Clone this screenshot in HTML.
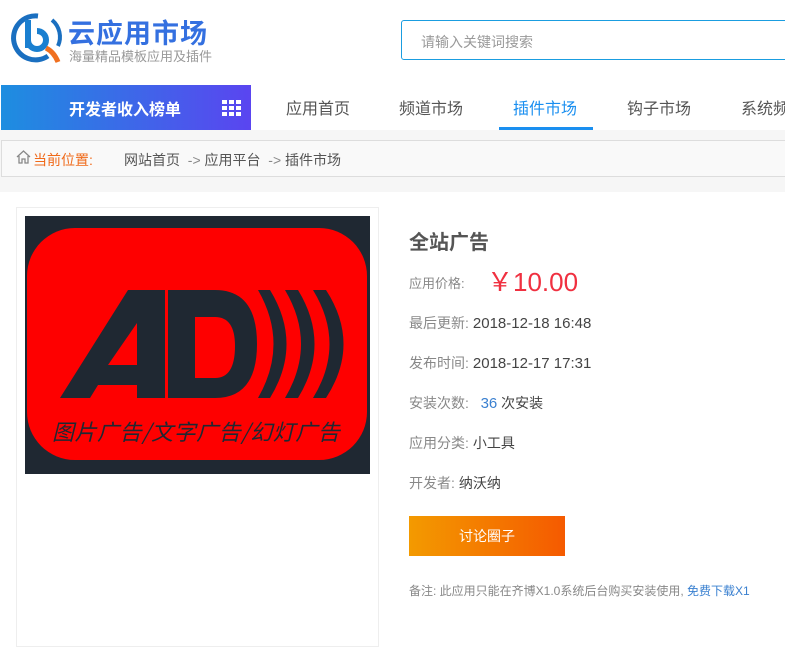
<!DOCTYPE html>
<html><head><meta charset="utf-8"><style>
*{margin:0;padding:0;box-sizing:border-box}
body{width:785px;height:639px;overflow:hidden;background:#fff;font-family:"Liberation Sans","Noto Sans CJK SC",sans-serif;position:relative;color:#333}
.a{position:absolute;white-space:nowrap}
.v{color:#444;font-size:15px;margin-left:4px}
</style></head><body>
<svg class="a" style="left:8px;top:10px" width="56" height="54" viewBox="0 0 56 54">
<path d="M30 6 A22 22 0 1 0 40 46" fill="none" stroke="#1a6fc0" stroke-width="5"/>
<path d="M44 10 A22 22 0 0 1 50 36" fill="none" stroke="#1a6fc0" stroke-width="4"/>
<path d="M20 10 L20 38 M20 30 A9 9 0 1 0 29 21" fill="none" stroke="#1a7fd0" stroke-width="6"/>
<path d="M38 38 Q46 42 50 52" fill="none" stroke="#f07020" stroke-width="5"/>
</svg>
<div class="a" style="left:68px;top:12px;font-size:27px;font-weight:bold;color:#3470e0;letter-spacing:1px">云应用市场</div>
<div class="a" style="left:69px;top:46px;font-size:13px;color:#999">海量精品模板应用及插件</div>
<div class="a" style="left:401px;top:20px;width:400px;height:40px;border:1px solid #1a9de0;border-radius:3px"></div>
<div class="a" style="left:421px;top:32px;font-size:14px;color:#999">请输入关键词搜索</div>
<div class="a" style="left:1px;top:85px;width:250px;height:45px;background:linear-gradient(90deg,#1d8ee0,#5a45f0)"></div>
<div class="a" style="left:69px;top:96px;font-size:16px;font-weight:bold;color:#fff">开发者收入榜单</div>
<svg class="a" style="left:222px;top:100px" width="20" height="16"><g fill="#fff"><rect x="0" y="0" width="5" height="4"/><rect x="7" y="0" width="5" height="4"/><rect x="14" y="0" width="5" height="4"/><rect x="0" y="6" width="5" height="4"/><rect x="7" y="6" width="5" height="4"/><rect x="14" y="6" width="5" height="4"/><rect x="0" y="12" width="5" height="4"/><rect x="7" y="12" width="5" height="4"/><rect x="14" y="12" width="5" height="4"/></g></svg>
<div class="a" style="left:286px;top:95px;font-size:16px;color:#555">应用首页</div>
<div class="a" style="left:399px;top:95px;font-size:16px;color:#555">频道市场</div>
<div class="a" style="left:513px;top:95px;font-size:16px;color:#1a8ff0">插件市场</div>
<div class="a" style="left:499px;top:127px;width:94px;height:3px;background:#1a8ff0"></div>
<div class="a" style="left:627px;top:95px;font-size:16px;color:#555">钩子市场</div>
<div class="a" style="left:741px;top:95px;font-size:16px;color:#555">系统频道</div>
<div class="a" style="left:0;top:130px;width:785px;height:62px;background:#f6f6f6"></div>
<div class="a" style="left:1px;top:140px;width:790px;height:37px;background:#f9f9f9;border:1px solid #ddd"></div>
<svg class="a" style="left:16px;top:150px" width="15" height="14"><path d="M1 7 L7.5 1 L14 7 M3 6 V13 H6 V9 H9 V13 H12 V6" fill="none" stroke="#888" stroke-width="1.3"/></svg>
<div class="a" style="left:33px;top:150px;font-size:14px;color:#f06a1a">当前位置:</div>
<div class="a" style="left:124px;top:150px;font-size:14px;color:#555">网站首页 &nbsp;<span style="color:#888">-&gt;</span> 应用平台 &nbsp;<span style="color:#888">-&gt;</span> 插件市场</div>
<div class="a" style="left:16px;top:207px;width:363px;height:440px;border:1px solid #eee"></div>
<div class="a" style="left:25px;top:216px;width:345px;height:258px;background:#1f2832"></div>
<div class="a" style="left:27px;top:228px;width:340px;height:232px;background:#fe0000;border-radius:48px"></div>
<svg class="a" style="left:25px;top:216px" width="345" height="258" viewBox="0 0 345 258">
<g fill="#1f2832" fill-rule="evenodd">
<path d="M35 182 L103 74 L140 74 L140 182 L112 182 L112 169 L73 169 L65 182 Z M83 149 L112 149 L112 107 Z"/>
<path d="M143 74 L190 74 Q232 74 232 128 Q232 182 190 182 L143 182 Z M170 101 L170 162 L190 162 Q210 162 210 130 Q210 101 190 101 Z"/>
<path d="M233 74 L245 74 Q278 128 245 182 L233 182 Q264 128 233 74 Z"/>
<path d="M260 74 L273 74 Q306 128 273 182 L260 182 Q292 128 260 74 Z"/>
<path d="M288 74 L301 74 Q336 128 301 182 L288 182 Q321 128 288 74 Z"/>
</g>
<text x="27" y="224" font-size="22" letter-spacing="0.5" font-style="italic" fill="#1f2832" font-family="Noto Sans CJK SC,sans-serif">图片广告/文字广告/幻灯广告</text>
</svg>
<div class="a" style="left:409px;top:226px;font-size:20px;font-weight:bold;color:#555">全站广告</div>
<div class="a" style="left:409px;top:273px;font-size:13px;color:#888">应用价格:</div>
<div class="a" style="left:487px;top:262px;font-size:26px;color:#f03040">￥10.00</div>
<div class="a" style="left:409px;top:313px;font-size:14px;color:#888">最后更新:<span class="v">2018-12-18 16:48</span></div>
<div class="a" style="left:409px;top:353px;font-size:14px;color:#888">发布时间:<span class="v">2018-12-17 17:31</span></div>
<div class="a" style="left:409px;top:393px;font-size:14px;color:#888">安装次数: &nbsp;&nbsp;<span style="color:#3a80d0;font-size:15px">36</span> <span style="color:#444">次安装</span></div>
<div class="a" style="left:409px;top:433px;font-size:14px;color:#888">应用分类:<span class="v" style="font-size:14px">小工具</span></div>
<div class="a" style="left:409px;top:473px;font-size:14px;color:#888">开发者:<span class="v" style="font-size:14px">纳沃纳</span></div>
<div class="a" style="left:409px;top:516px;width:156px;height:40px;background:linear-gradient(90deg,#f39a00,#f55a00);color:#fff;font-size:14px;text-align:center;line-height:40px">讨论圈子</div>
<div class="a" style="left:409px;top:582px;font-size:12px;color:#888">备注: 此应用只能在齐博X1.0系统后台购买安装使用, <span style="color:#3a80d0">免费下载X1</span></div>
</body></html>
